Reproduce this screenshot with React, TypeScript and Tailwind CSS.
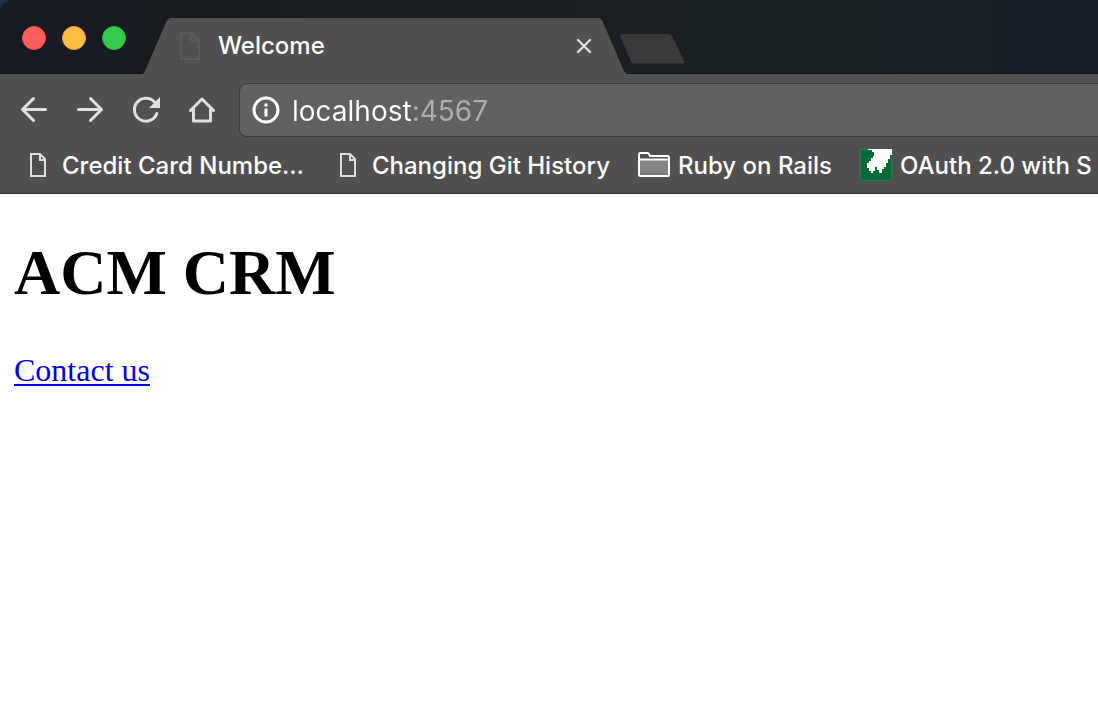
import type { ReactNode } from "react";

function PageIcon() {
  return (
    <svg viewBox="0 0 32 32" className="size-8 shrink-0" fill="none" stroke="#dedede" strokeWidth="2" aria-hidden="true">
      <path d="M9 5H18L23 10V27H9Z" />
      <path d="M18 5V11H23" />
    </svg>
  );
}

function FolderIcon() {
  return (
    <svg viewBox="0 0 32 32" className="size-8 shrink-0" aria-hidden="true">
      <path d="M2 11H30V26H2Z" fill="#858585" />
      <path
        d="M1 5.500Q1 4 2.500 4H9.500Q10.500 4 11 5L12 7H29.500Q31 7 31 8.500V25.500Q31 27 29.500 27H2.500Q1 27 1 25.500Z"
        fill="none"
        stroke="#fff"
        strokeWidth="2"
      />
      <path d="M1 10.500H31" stroke="#fff" strokeWidth="2" />
      <path d="M2 25H30" stroke="#6b6b6b" strokeWidth="1" />
    </svg>
  );
}

function GreenSiteIcon() {
  return (
    <svg viewBox="0 0 32 32" className="size-8 shrink-0" aria-hidden="true">
      <path d="M0 0H32V32H0Z" fill="#046b39" />
      <path
        d="M8 0H32V6H30V10H28V14H26V18H24V20H22V24H19V21H17V18H15V22H13V24H11V22H9V19H7V14H9V12H11V9H13V7H14V3H12V1H8Z"
        fill="#fff"
      />
      <path d="M0.500 0.500V31.500H31.500V7M0.500 0.500H8" fill="none" stroke="#2b7953" strokeWidth="1" />
    </svg>
  );
}

function ToolButton({ label, children }: { label: string; children: ReactNode }) {
  return (
    <button type="button" aria-label={label} className="size-8 shrink-0">
      <svg
        viewBox="0 0 32 32"
        className="size-8"
        fill="none"
        stroke="#e0e0e0"
        strokeWidth="3"
        strokeLinecap="round"
        strokeLinejoin="round"
      >
        {children}
      </svg>
    </button>
  );
}

function Bookmark({ icon, children }: { icon: ReactNode; children: ReactNode }) {
  return (
    <a href="#" className="flex shrink-0 items-center gap-2">
      {icon}
      <span className="pt-0.5">{children}</span>
    </a>
  );
}

export default function App() {
  return (
    <div className="flex min-h-screen flex-col overflow-hidden bg-white font-['Inter',sans-serif]">
      <header className="bg-[#505050] text-white">
        <div className="bg-[#1b3048]">
          <div className="flex h-[74px] items-end rounded-tl-xl border-b border-[#111519] bg-linear-to-r from-[#171a20] via-[#192022] via-75% to-[#161d29]">
            <div className="flex w-[143px] shrink-0 gap-4 self-start pt-[26px] pl-[22px]">
              <button type="button" aria-label="Close window" className="size-6 rounded-full border border-[#e2514b] bg-[#ff605c]" />
              <button type="button" aria-label="Minimize window" className="size-6 rounded-full border border-[#e2a336] bg-[#ffbd44]" />
              <button type="button" aria-label="Zoom window" className="size-6 rounded-full border border-[#28b33b] bg-[#34cb4a]" />
            </div>
            <div className="-mb-px flex h-14 w-[484px] shrink-0 items-center bg-[#505050] pr-[31px] pl-[31px] [clip-path:polygon(0_100%,2px_53px,24px_2px,27px_0,456px_0,459px_2px,481px_53px,484px_100%)]">
              <svg viewBox="0 0 32 32" className="size-8 shrink-0" fill="none" stroke="#5a5a5a" strokeWidth="2" aria-hidden="true">
                <path d="M7 3H17L25 11V29H7Z" />
                <path d="M17 3V11H25" />
              </svg>
              <span className="grow pl-3 text-2xl font-medium">Welcome</span>
              <button type="button" aria-label="Close tab" className="size-6">
                <svg viewBox="0 0 24 24" className="size-6" stroke="#dedede" strokeWidth="2.4" strokeLinecap="round">
                  <path d="M6 6L18 18M18 6L6 18" />
                </svg>
              </button>
            </div>
            <button type="button" aria-label="New tab" className="-ml-2 shrink-0 pb-[9px]">
              <svg viewBox="0 0 66 30" className="block h-[30px] w-[66px]" fill="#393939">
                <path d="M3.500 0H50Q52 0 53 2L65 27Q66 29.500 63.500 29.500H15Q13 29.500 12 28L1.500 3Q.5 0 3.500 0Z" />
              </svg>
            </button>
          </div>
        </div>

        <nav aria-label="Browser toolbar" className="flex items-center pt-[9px] pl-[18px]">
          <div className="flex gap-6 pr-[21px]">
            <ToolButton label="Back">
              <path d="M27.500 15.500H5M15.500 4.500L4.500 15.500L15.500 26.500" />
            </ToolButton>
            <ToolButton label="Forward">
              <path d="M4.500 15.500H27M16.500 4.500L27.500 15.500L16.500 26.500" />
            </ToolButton>
            <ToolButton label="Reload">
              <path d="M24.500 8A11.500 11.500 0 1 0 26.800 19.500" />
              <path d="M30 3V14H19Z" fill="#e0e0e0" stroke="none" />
            </ToolButton>
            <ToolButton label="Home">
              <path d="M4.500 16.500L16 5L27.500 16.500M7.500 15V27H24.500V15" />
            </ToolButton>
          </div>
          <div className="flex h-[54px] min-w-0 grow items-center rounded-l-lg border border-r-0 border-[#3c3c3c] bg-[#616161] pl-3">
            <svg viewBox="0 0 28 28" className="size-7 shrink-0" fill="none" stroke="#fff" strokeWidth="3" aria-hidden="true">
              <circle cx="14" cy="14" r="12" />
              <path d="M14 12.500V20.500M14 7.500V10.500" />
            </svg>
            <input
              type="text"
              aria-label="Address"
              defaultValue="localhost:4567"
              className="ml-3 min-w-0 grow bg-linear-to-r from-white from-[120px] to-[#adadad] to-[120px] bg-clip-text pt-0.5 text-[28px] text-transparent caret-white outline-none"
            />
          </div>
        </nav>

        <nav
          aria-label="Bookmarks"
          className="flex h-[57px] items-center gap-7 overflow-hidden border-b border-[#303030] pl-[22px] text-2xl font-medium whitespace-nowrap"
        >
          <Bookmark icon={<PageIcon />}>Credit Card Numbe…</Bookmark>
          <Bookmark icon={<PageIcon />}>Changing Git History</Bookmark>
          <Bookmark icon={<FolderIcon />}>Ruby on Rails</Bookmark>
          <Bookmark icon={<GreenSiteIcon />}>OAuth 2.0 with S</Bookmark>
        </nav>
      </header>

      <main className="px-[14px] pt-[42px] font-['Liberation_Serif',serif]">
        <h1 className="text-[64px] leading-[74px] font-bold text-black">ACM CRM</h1>
        <p className="mt-[42px] text-[32px] leading-9">
          <a href="#" className="text-[#0000e0] underline decoration-2 underline-offset-3">
            Contact us
          </a>
        </p>
      </main>
    </div>
  );
}
